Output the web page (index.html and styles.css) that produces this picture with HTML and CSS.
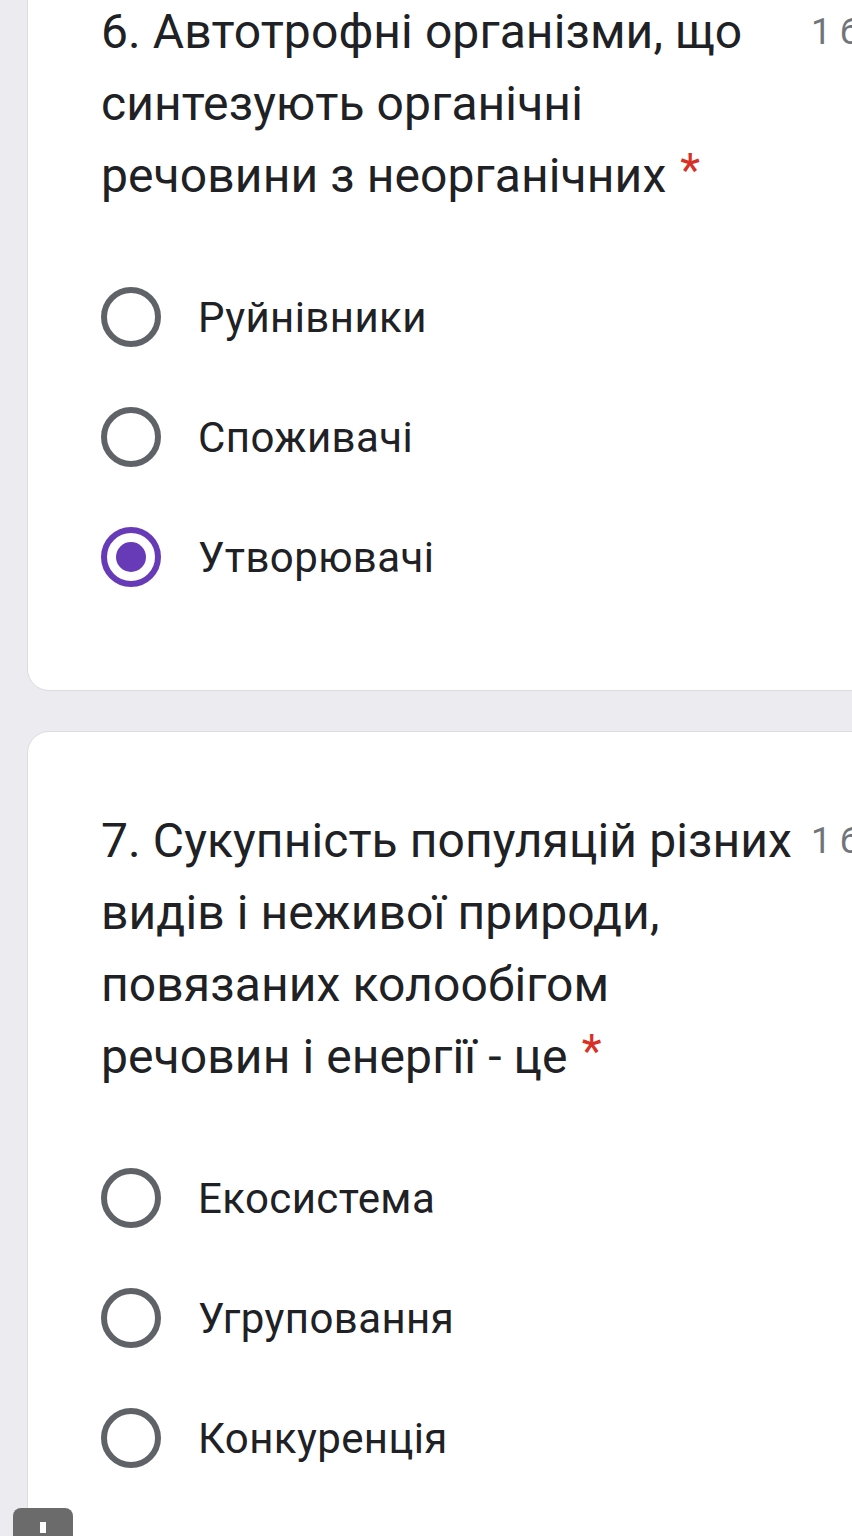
FILE: index.html
```html
<!DOCTYPE html>
<html lang="uk">
<head>
<meta charset="utf-8">
<link rel="stylesheet" href="styles.css">
</head>
<body>
<div class="page">
  <div class="stack">
    <section class="card">
      <div class="q-head">
        <div class="q-title">6. Автотрофні організми, що синтезують органічні речовини з неорганічних <span class="req">*</span></div>
        <div class="q-points">1 бал</div>
      </div>
      <div class="options">
        <div class="opt"><span class="radio"></span><span class="opt-label">Руйнівники</span></div>
        <div class="opt"><span class="radio"></span><span class="opt-label">Споживачі</span></div>
        <div class="opt"><span class="radio checked"></span><span class="opt-label">Утворювачі</span></div>
      </div>
    </section>
    <section class="card">
      <div class="q-head">
        <div class="q-title">7. Сукупність популяцій різних видів і неживої природи, повязаних колообігом речовин і енергії - це <span class="req">*</span></div>
        <div class="q-points">1 бал</div>
      </div>
      <div class="options">
        <div class="opt"><span class="radio"></span><span class="opt-label">Екосистема</span></div>
        <div class="opt"><span class="radio"></span><span class="opt-label">Угруповання</span></div>
        <div class="opt"><span class="radio"></span><span class="opt-label">Конкуренція</span></div>
      </div>
    </section>
  </div>
  <div class="float-btn"><span class="float-bar"></span></div>
</div>
</body>
</html>
```
FILE: styles.css
```css
html, body {
  margin: 0;
  padding: 0;
}
body {
  background: #ebebf0;
  font-family: Roboto, "Noto Sans", Arial, sans-serif;
  color: #202124;
  overflow: hidden;
  width: 852px;
  height: 1536px;
}
.page {
  position: relative;
  width: 852px;
  height: 1536px;
  overflow: hidden;
}
.stack {
  display: flex;
  flex-direction: column;
  gap: 40px;
  margin-top: -78px;
  margin-left: 27px;
  margin-right: -40px;
}
.card {
  background: #ffffff;
  border: 1px solid #dadce0;
  border-radius: 22px;
  padding: 73px 0 73px 73px;
}
.q-head {
  display: flex;
  align-items: flex-start;
}
.q-title {
  width: 700px;
  flex: none;
  font-size: 48px;
  line-height: 72px;
  letter-spacing: 0.1px;
}
.req {
  color: #d93025;
  font-size: 46px;
  vertical-align: top;
  line-height: 60px;
  margin-left: 2px;
}
.q-points {
  margin-left: 10px;
  font-size: 36px;
  line-height: 72px;
  color: #70757a;
  white-space: nowrap;
}
.options {
  margin-top: 45px;
  display: flex;
  flex-direction: column;
}
.opt {
  height: 120px;
  display: flex;
  align-items: center;
}
.radio {
  box-sizing: border-box;
  width: 60px;
  height: 60px;
  border: 6px solid #5f6368;
  border-radius: 50%;
  display: flex;
  align-items: center;
  justify-content: center;
  flex: none;
}
.radio.checked {
  border-color: #673ab7;
}
.radio.checked::after {
  content: "";
  width: 30px;
  height: 30px;
  border-radius: 50%;
  background: #673ab7;
}
.opt-label {
  margin-left: 37px;
  font-size: 42px;
  letter-spacing: 0.4px;
  color: #202124;
}
.float-btn {
  position: absolute;
  left: 13px;
  top: 1508px;
  width: 60px;
  height: 50px;
  background: #6b6b6b;
  border-radius: 8px;
}
.float-bar {
  position: absolute;
  left: 27px;
  top: 14px;
  width: 6px;
  height: 11px;
  background: #ffffff;
}
```
